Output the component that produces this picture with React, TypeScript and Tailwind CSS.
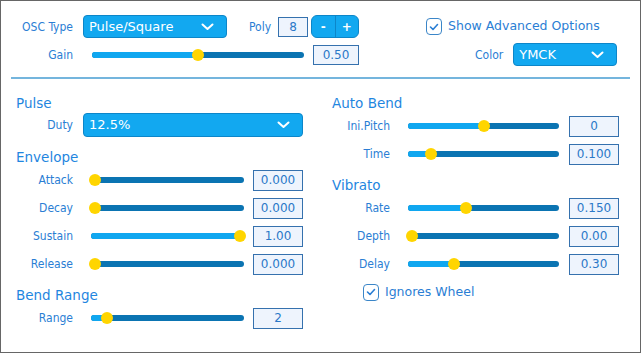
import React from "react"

const FONT = "font-['DejaVu_Sans',sans-serif]"
const LABEL = "font-['DejaVu_Sans_Condensed','DejaVu_Sans',sans-serif] [font-stretch:semi-condensed] text-[12px] text-[#2a7ed4] whitespace-nowrap"
const HEADING = "text-[13.5px] leading-[18px] text-[#1f86e0]"

function Chevron() {
  return (
    <svg width="13" height="8" viewBox="0 0 13 8" fill="none">
      <polyline points="1.5,1.5 6.5,6 11.5,1.5" stroke="white" strokeWidth="2" strokeLinecap="round" strokeLinejoin="round" />
    </svg>
  )
}

function Check() {
  return (
    <svg width="10" height="8" viewBox="0 0 10 8" fill="none">
      <polyline points="1.5,4 4,6.5 8.5,1.5" stroke="#2a7ed4" strokeWidth="1.6" strokeLinecap="round" strokeLinejoin="round" />
    </svg>
  )
}

function Select({ text, className }: { text: string; className: string }) {
  return (
    <div
      className={`flex items-center justify-between rounded-[4px] border border-[#0c86c9] bg-[#12a8f0] pl-[5px] pr-[12px] text-[13px] text-white ${className}`}
    >
      <span>{text}</span>
      <Chevron />
    </div>
  )
}

function Slider({ value, className }: { value: number; className: string }) {
  // thumb center runs from 4px in to 4px before the end
  return (
    <div className={`relative h-[12px] ${className}`}>
      <div className="absolute inset-x-0 top-[3px] h-[6px] rounded-full bg-[#0b74b2]" />
      <div
        className="absolute left-0 top-[3px] h-[6px] rounded-full bg-[#10a7f0]"
        style={{ width: `calc(4px + ${value} * (100% - 8px))` }}
      />
      <div
        className="absolute top-0 h-[12px] w-[12px] rounded-full bg-[#ffd500]"
        style={{ left: `calc(4px + ${value} * (100% - 8px) - 6px)` }}
      />
    </div>
  )
}

function ValueBox({ value, className }: { value: string; className: string }) {
  return (
    <div
      className={`flex items-center justify-center border border-[#3571ae] bg-[#eef4fd] text-[12px] text-[#2a78c8] ${className}`}
    >
      {value}
    </div>
  )
}

function CheckBox({ label }: { label: string }) {
  return (
    <div className="flex items-center">
      <div className="flex h-[17px] w-[16px] items-center justify-center rounded-[4px] border-[1.5px] border-[#3b86c8] bg-white">
        <Check />
      </div>
      <span className="ml-[6px] text-[12.5px] text-[#2a7ed4]">{label}</span>
    </div>
  )
}

function LeftRow({ label, value, pos }: { label: string; value: string; pos: number }) {
  return (
    <div className="flex h-[22px] items-center">
      <div className={`w-[57px] text-right ${LABEL}`}>{label}</div>
      <Slider value={pos} className="ml-[18px] w-[153px]" />
      <ValueBox value={value} className="ml-[9px] h-[21px] w-[50px]" />
    </div>
  )
}

function RightRow({ label, value, pos }: { label: string; value: string; pos: number }) {
  return (
    <div className="flex h-[22px] items-center">
      <div className={`w-[58px] text-right ${LABEL}`}>{label}</div>
      <Slider value={pos} className="ml-[18px] w-[151px]" />
      <ValueBox value={value} className="ml-[10px] h-[21px] w-[50px]" />
    </div>
  )
}

export default function App() {
  return (
    <div className={`h-[353px] w-[641px] border border-[#666] bg-white ${FONT}`}>
      {/* Top controls */}
      <div className="px-[15px] pt-[14px]">
        <div className="flex h-[23px] items-center">
          <div className={`w-[57px] text-right ${LABEL}`}>OSC Type</div>
          <Select text="Pulse/Square" className="ml-[10px] h-[23px] w-[144px]" />
          <span className={`ml-[22px] ${LABEL}`}>Poly</span>
          <ValueBox value="8" className="ml-[7px] h-[20px] w-[30px]" />
          <div className="ml-[3px] flex h-[23px] w-[48px] overflow-hidden rounded-[6px] border border-[#0c86c9] bg-[#12a8f0] text-[12px] font-bold text-white">
            <div className="flex flex-1 items-center justify-center border-r border-[#0c86c9]">-</div>
            <div className="flex flex-1 items-center justify-center">+</div>
          </div>
          <div className="ml-[67px]">
            <CheckBox label="Show Advanced Options" />
          </div>
        </div>
        <div className="mt-[5px] flex h-[23px] items-center">
          <div className={`w-[57px] text-right ${LABEL}`}>Gain</div>
          <Slider value={0.5} className="ml-[19px] w-[212px]" />
          <ValueBox value="0.50" className="ml-[9px] h-[20px] w-[46px]" />
          <span className={`ml-[116px] ${LABEL}`}>Color</span>
          <Select text="YMCK" className="ml-[10px] h-[23px] w-[104px]" />
        </div>
      </div>

      <div className="mx-[10px] mt-[11px] h-[2px] bg-[#74b5dd]" />

      {/* Parameter columns */}
      <div className="mt-[15px] flex px-[15px]">
        <div className="flex w-[316px] flex-col">
          <div className={HEADING}>Pulse</div>
          <div className="mt-[1px] flex items-center">
            <div className={`w-[57px] text-right ${LABEL}`}>Duty</div>
            <Select text="12.5%" className="ml-[10px] h-[24px] w-[220px]" />
          </div>
          <div className={`mt-[11px] ${HEADING}`}>Envelope</div>
          <div className="mt-[3px] flex flex-col gap-[6px]">
            <LeftRow label="Attack" value="0.000" pos={0} />
            <LeftRow label="Decay" value="0.000" pos={0} />
            <LeftRow label="Sustain" value="1.00" pos={1} />
            <LeftRow label="Release" value="0.000" pos={0} />
          </div>
          <div className={`mt-[11px] ${HEADING}`}>Bend Range</div>
          <div className="mt-[3px]">
            <LeftRow label="Range" value="2" pos={0.086} />
          </div>
        </div>

        <div className="flex flex-col">
          <div className={HEADING}>Auto Bend</div>
          <div className="mt-[3px] flex flex-col gap-[6px]">
            <RightRow label="Ini.Pitch" value="0" pos={0.5} />
            <RightRow label="Time" value="0.100" pos={0.133} />
          </div>
          <div className={`mt-[11px] ${HEADING}`}>Vibrato</div>
          <div className="mt-[3px] flex flex-col gap-[6px]">
            <RightRow label="Rate" value="0.150" pos={0.378} />
            <RightRow label="Depth" value="0.00" pos={0} />
            <RightRow label="Delay" value="0.30" pos={0.297} />
          </div>
          <div className="ml-[31px] mt-[8px]">
            <CheckBox label="Ignores Wheel" />
          </div>
        </div>
      </div>
    </div>
  )
}
